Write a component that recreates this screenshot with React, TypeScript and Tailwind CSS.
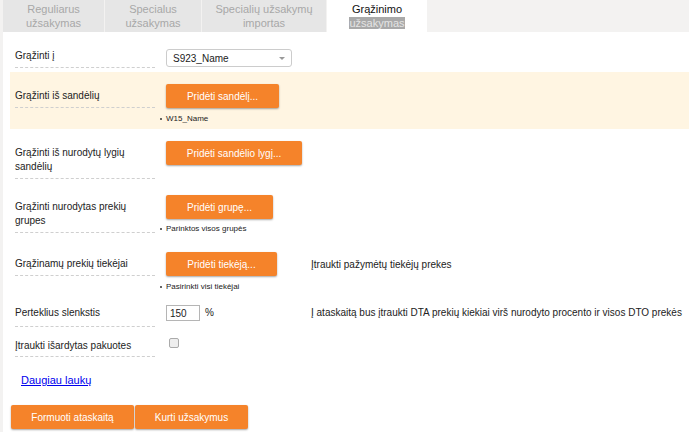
import React from "react";

const tabs = [
  { top: "Reguliarus", bottom: "užsakymas", w: "w-[101px]" },
  { top: "Specialus", bottom: "užsakymas", w: "w-[96px]" },
  { top: "Specialių užsakymų", bottom: "importas", w: "w-[124px]" },
];

function OrangeButton({ children, className = "" }: { children: React.ReactNode; className?: string }) {
  return (
    <button
      className={
        "h-[24px] rounded-[2px] bg-[#f5832a] text-[10px] text-white shadow-[0_1px_2px_rgba(0,0,0,0.35)] " +
        className
      }
    >
      {children}
    </button>
  );
}

function Bullet({ children, className = "" }: { children: React.ReactNode; className?: string }) {
  return (
    <div className={"flex items-center gap-[4px] text-[8px] leading-[10px] text-[#222] " + className}>
      <span className="h-[2px] w-[2px] rounded-full bg-[#333]" />
      {children}
    </div>
  );
}

function Label({ children, className = "" }: { children: React.ReactNode; className?: string }) {
  return (
    <div className={"w-[140px] shrink-0 border-b border-dashed border-[#cfcfcf] leading-[14px] " + className}>
      {children}
    </div>
  );
}

export default function App() {
  return (
    <div className="flex min-h-screen bg-white font-['Liberation_Sans',Arial,sans-serif] text-[10px] text-[#222]">
      {/* left strip */}
      <div className="w-[3px] shrink-0 bg-[#f3f2f1]" />

      <div className="flex-1">
        {/* ── Tabs ─────────────────────────────────────────── */}
        <div className="flex h-[32px] gap-[1px] bg-[#f3f2f1]">
          {tabs.map((t) => (
            <div
              key={t.top}
              className={`${t.w} bg-[#e6e6e6] pt-[2px] text-center text-[11px] leading-[14px] text-[#a8a8a8]`}
            >
              <div>{t.top}</div>
              <div>{t.bottom}</div>
            </div>
          ))}
          <div className="w-[100px] bg-white pt-[2px] text-center text-[11px] leading-[14px] text-[#111]">
            <div>Grąžinimo</div>
            <div>
              <span className="bg-[#a9a9a9] text-[#e4e4e4]">užsakymas</span>
            </div>
          </div>
        </div>

        {/* ── Form ─────────────────────────────────────────── */}
        <div className="ml-[7px]">
          {/* Grąžinti į */}
          <div className="flex pl-[5px] pb-[4px] pt-[17px]">
            <Label className="h-[19px] leading-[12px]">Grąžinti į</Label>
            <div className="ml-[11px]">
              <div className="flex h-[18px] w-[126px] items-center justify-between rounded-[3px] border border-[#cccccc] bg-white pl-[6px] pr-[6px]">
                <span>S923_Name</span>
                <span className="h-0 w-0 border-x-[3px] border-t-[3px] border-x-transparent border-t-[#999]" />
              </div>
            </div>
          </div>

          {/* Grąžinti iš sandėlių */}
          <div className="flex bg-[#fff5e2] pl-[5px] pb-[5px] pt-[12px]">
            <Label className="self-start pb-[4px] pt-[5px]">Grąžinti iš sandėlių</Label>
            <div className="ml-[11px]">
              <OrangeButton className="w-[113px]">Pridėti sandėlį...</OrangeButton>
              <Bullet className="ml-[-6px] mt-[6px]">W15_Name</Bullet>
            </div>
          </div>

          {/* Grąžinti iš nurodytų lygių sandėlių */}
          <div className="flex pl-[5px] pb-[4px] pt-[12px]">
            <Label className="pb-[4px] pt-[5px]">
              Grąžinti iš nurodytų lygių
              <br />
              sandėlių
            </Label>
            <div className="ml-[11px]">
              <OrangeButton className="w-[136px]">Pridėti sandėlio lygį...</OrangeButton>
            </div>
          </div>

          {/* Grąžinti nurodytas prekių grupes */}
          <div className="flex pl-[5px] pb-[6px] pt-[12px]">
            <Label className="self-start pb-[4px] pt-[5px]">
              Grąžinti nurodytas prekių
              <br />
              grupes
            </Label>
            <div className="ml-[11px]">
              <OrangeButton className="w-[107px]">Pridėti grupę...</OrangeButton>
              <Bullet className="ml-[-6px] mt-[5px]">Parinktos visos grupės</Bullet>
            </div>
          </div>

          {/* Grąžinamų prekių tiekėjai */}
          <div className="flex pl-[5px] pb-[5px] pt-[12px]">
            <Label className="self-start pb-[4px] pt-[5px]">Grąžinamų prekių tiekėjai</Label>
            <div className="ml-[11px] w-[145px] shrink-0">
              <OrangeButton className="w-[111px]">Pridėti tiekėją...</OrangeButton>
              <Bullet className="ml-[-6px] mt-[6px]">Pasirinkti visi tiekėjai</Bullet>
            </div>
            <div className="pt-[6px] leading-[14px]">Įtraukti pažymėtų tiekėjų prekes</div>
          </div>

          {/* Perteklius slenkstis */}
          <div className="flex pl-[5px] pt-[8px]">
            <Label className="pb-[6px] pt-[1px]">Perteklius slenkstis</Label>
            <div className="ml-[11px] flex w-[145px] shrink-0 items-start gap-[5px]">
              <div className="flex h-[16px] w-[34px] items-center border border-[#b5b5b5] pl-[3px]">150</div>
              <span className="pt-[1px] leading-[14px]">%</span>
            </div>
            <div className="pt-[1px] leading-[14px]">
              Į ataskaitą bus įtraukti DTA prekių kiekiai virš nurodyto procento ir visos DTO prekės
            </div>
          </div>

          {/* Įtraukti išardytas pakuotes */}
          <div className="flex pl-[5px] pt-[12px]">
            <Label className="pb-[3px]">Įtraukti išardytas pakuotes</Label>
            <div className="ml-[14px] pt-[-1px]">
              <div className="mt-[-1px] h-[10px] w-[10px] rounded-[2px] border border-[#aaaaaa] bg-[#eeeeee]" />
            </div>
          </div>

          {/* Daugiau laukų */}
          <div className="pl-[11px] pt-[16px]">
            <a href="#" className="text-[11px] leading-[14px] text-[#0000ee] underline">
              Daugiau laukų
            </a>
          </div>

          {/* Actions */}
          <div className="mt-[17px] flex gap-[1px] pl-[1px]">
            <OrangeButton className="h-[23px] w-[123px]">Formuoti ataskaitą</OrangeButton>
            <OrangeButton className="h-[23px] w-[113px]">Kurti užsakymus</OrangeButton>
          </div>
        </div>
      </div>
    </div>
  );
}
